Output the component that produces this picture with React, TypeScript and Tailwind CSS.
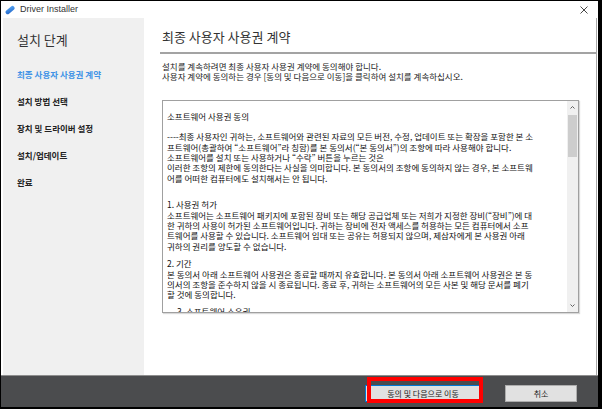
const steps = [
  { label: "최종 사용자 사용권 계약", active: true },
  { label: "설치 방법 선택" },
  { label: "장치 및 드라이버 설정" },
  { label: "설치/업데이트" },
  { label: "완료" },
];

const para1 = [
  "----최종 사용자인 귀하는, 소프트웨어와 관련된 자료의 모든 버전, 수정, 업데이트 또는 확장을 포함한 본 소",
  "프트웨어(총괄하여 \u201C소프트웨어\u201D라 칭함)를 본 동의서(\u201C본 동의서\u201D)의 조항에 따라 사용해야 합니다.",
  "소프트웨어를 설치 또는 사용하거나 \u201C수락\u201D 버튼을 누르는 것은",
  "이러한 조항의 제한에 동의한다는 사실을 의미합니다. 본 동의서의 조항에 동의하지 않는 경우, 본 소프트웨",
  "어를 어떠한 컴퓨터에도 설치해서는 안 됩니다.",
];

const para2 = [
  "1. 사용권 허가",
  "소프트웨어는 소프트웨어 패키지에 포함된 장비 또는 해당 공급업체 또는 저희가 지정한 장비(\u201C장비\u201D)에 대",
  "한 귀하의 사용이 허가된 소프트웨어입니다. 귀하는 장비에 전자 액세스를 허용하는 모든 컴퓨터에서 소프",
  "트웨어를 사용할 수 있습니다. 소프트웨어 임대 또는 공유는 허용되지 않으며, 제삼자에게 본 사용권 아래",
  "귀하의 권리를 양도할 수 없습니다.",
];

const para3 = [
  "2. 기간",
  "본 동의서 아래 소프트웨어 사용권은 종료할 때까지 유효합니다. 본 동의서 아래 소프트웨어 사용권은 본 동",
  "의서의 조항을 준수하지 않을 시 종료됩니다. 종료 후, 귀하는 소프트웨어의 모든 사본 및 해당 문서를 폐기",
  "할 것에 동의합니다.",
];

function Lines({ lines, className = "" }: { lines: string[]; className?: string }) {
  return (
    <div className={className}>
      {lines.map((l, i) => (
        <div key={i} className="whitespace-nowrap">
          {l}
        </div>
      ))}
    </div>
  );
}

function AppIcon() {
  return (
    <svg width="10" height="10" viewBox="0 0 10 10">
      <defs>
        <linearGradient id="ic" x1="0" y1="1" x2="1" y2="0">
          <stop offset="0" stopColor="#1e63c8" />
          <stop offset="1" stopColor="#5aa9f5" />
        </linearGradient>
      </defs>
      <rect x="-0.2" y="3" width="10.4" height="4.2" rx="2.1" fill="url(#ic)" transform="rotate(-40 5 5)" />
    </svg>
  );
}

export default function App() {
  const kr = { fontFamily: '"Noto Sans CJK KR", "Noto Sans", sans-serif' };
  return (
    <div className="h-[409px] w-[602px] overflow-hidden bg-black pl-[1px] pt-[1px]">
      <div className="flex h-[406px] w-[597px] flex-col bg-white" style={kr}>
        {/* title bar */}
        <div className="flex h-[17px] shrink-0 items-center justify-between pl-[4px] pr-[10px]">
          <div className="flex items-center gap-[5px]">
            <AppIcon />
            <span
              className="text-[9px] leading-none text-[#333]"
              style={{ fontFamily: '"Liberation Sans", Arial, sans-serif' }}
            >
              Driver Installer
            </span>
          </div>
          <svg width="8" height="8" viewBox="0 0 8 8">
            <path d="M0.5 0.5 L7.5 7.5 M7.5 0.5 L0.5 7.5" stroke="#333" strokeWidth="0.9" />
          </svg>
        </div>

        {/* main */}
        <div className="flex h-[357px] shrink-0 pl-[2px] pr-[1px]">
          <aside className="w-[141px] shrink-0 bg-[#f0f0f0] pl-[14px] pt-[14px]">
            <h2 className="text-[13px] leading-[16px] text-[#333]">설치 단계</h2>
            <ul className="mt-[21px] flex flex-col gap-[16px]">
              {steps.map((s) => (
                <li
                  key={s.label}
                  className={`text-[8.5px] font-bold leading-[11px] ${s.active ? "text-[#4193e6]" : "text-[#222]"}`}
                >
                  {s.label}
                </li>
              ))}
            </ul>
          </aside>

          <section className="flex-1 border-r border-[#a8a8a8] pt-[11px]">
            <div className="ml-[16px] border-b-2 border-[#a3a3a3] pb-[7px] pl-[2px]">
              <h1 className="text-[13px] leading-[16px] text-[#333]">최종 사용자 사용권 계약</h1>
            </div>
            <div className="ml-[18px] mt-[7px] text-[8.5px] leading-[10.3px] text-[#222]">
              <p>설치를 계속하려면 최종 사용자 사용권 계약에 동의해야 합니다.</p>
              <p>사용자 계약에 동의하는 경우 [동의 및 다음으로 이동]을 클릭하여 설치를 계속하십시오.</p>
            </div>

            <div className="ml-[18px] mt-[18px] flex h-[213px] w-[417px] border border-[#a0a0a0] shadow-[1px_1px_1px_rgba(0,0,0,0.15)]">
              <div className="flex-1 overflow-hidden pl-[4px] pt-[10px] text-[8.5px] leading-[10.3px] text-[#111]">
                <div>소프트웨어 사용권 동의</div>
                <Lines lines={para1} className="mt-[10.5px]" />
                <Lines lines={para2} className="mt-[16.5px]" />
                <Lines lines={para3} className="mt-[7.5px]" />
                <div className="mt-[6.5px] whitespace-nowrap pl-[10px]">3. 소프트웨어 소유권</div>
              </div>
              <div className="flex w-[11px] shrink-0 flex-col items-center bg-[#f0f0f0]">
                <svg width="7" height="12" viewBox="0 0 7 12" className="shrink-0">
                  <path d="M1.5 7.5 L3.5 5.5 L5.5 7.5" stroke="#606060" strokeWidth="1" fill="none" />
                </svg>
                <div className="mt-[2px] h-[42px] w-[9px] bg-[#cdcdcd]" />
                <div className="flex-1" />
                <svg width="7" height="12" viewBox="0 0 7 12" className="shrink-0">
                  <path d="M1.5 4.5 L3.5 6.5 L5.5 4.5" stroke="#606060" strokeWidth="1" fill="none" />
                </svg>
              </div>
            </div>
          </section>
        </div>

        {/* bottom bar */}
        <div className="flex h-[32px] shrink-0 items-start justify-end gap-[24px] border-t border-[#8e8e8e] bg-[#4b4c4e] pr-[21px] pt-[9px]">
          <div className="relative">
            <button className="flex h-[17px] w-[116px] items-center justify-center border border-[#0078d7] bg-[#e1e1e1] text-[8px] text-[#222]">
              동의 및 다음으로 이동
            </button>
            <div className="pointer-events-none absolute -top-[8px] left-[2px] h-[26px] w-[116px] border-[4px] border-[#ff0000]" />
          </div>
          <button className="flex h-[17px] w-[72px] items-center justify-center border border-[#adadad] bg-[#e1e1e1] text-[8px] text-[#222]">
            취소
          </button>
        </div>
      </div>
    </div>
  );
}
